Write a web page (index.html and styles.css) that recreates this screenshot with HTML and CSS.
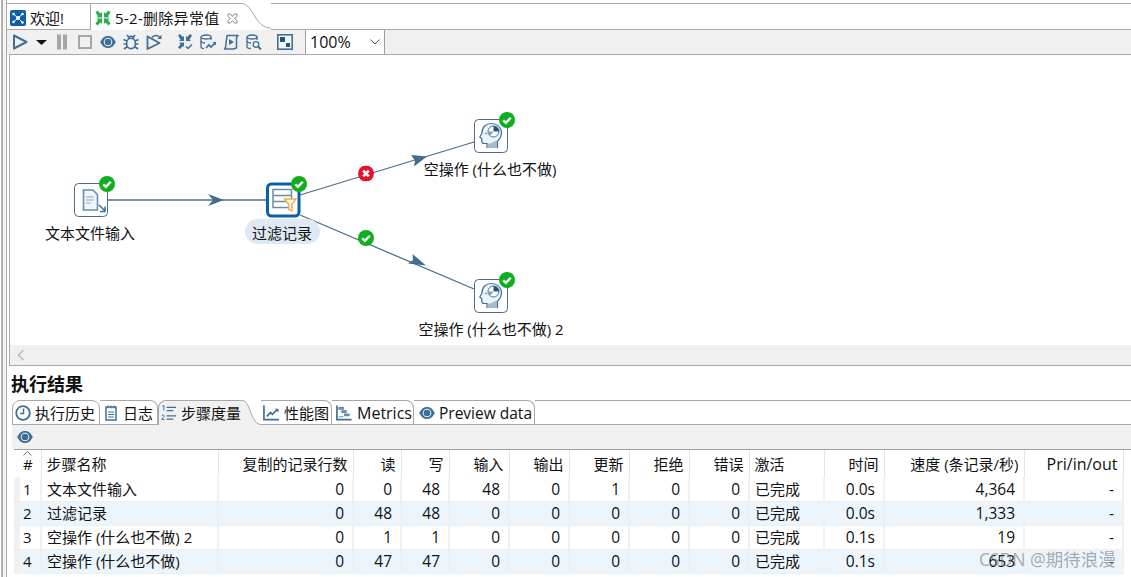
FILE: index.html
```html
<!DOCTYPE html>
<html lang="zh">
<head>
<meta charset="utf-8">
<title>5-2-删除异常值</title>
<link rel="stylesheet" href="styles.css">
</head>
<body>
<svg class="defs" aria-hidden="true">
  <symbol id="i-run" viewBox="0 0 16 16"><path d="M2 1.500 14.500 8 2 14.500Z" fill="none" stroke="#3f6f96" stroke-width="2" stroke-linejoin="round"/></symbol>
  <symbol id="i-eye" viewBox="0 0 16 16"><path d="M.2 8C2.500 3.500 5 2 8 2s5.500 1.500 7.800 6C13.500 12.500 11 14 8 14S2.500 12.500 .2 8Z" fill="#3f6f96"/><circle cx="8" cy="8" r="4.300" fill="#e8f0f6"/><circle cx="8" cy="8" r="3.300" fill="#3f6f96"/></symbol>
  <symbol id="i-bug" viewBox="0 0 16 16"><g fill="none" stroke="#3f6f96" stroke-width="1.600"><ellipse cx="8" cy="9.500" rx="4.400" ry="5.200"/><path d="M5.500 5.200C5.500 3 6.500 2.300 8 2.300s2.500.7 2.500 2.900M4 1l2 2.500M12 1l-2 2.500M0.500 5.500 4 7M15.500 5.500 12 7M0.500 10h3.500M15.500 10H12M1 15l3.500-2.500M15 15l-3.500-2.500"/></g></symbol>
  <symbol id="i-prev" viewBox="0 0 16 16"><path d="M1.500 2.500 13.500 9 1.500 15Z" fill="none" stroke="#3f6f96" stroke-width="1.800" stroke-linejoin="round"/><path d="M6 3.500C8 .8 11.500 .8 13.500 3" fill="none" stroke="#3f6f96" stroke-width="1.500"/><path d="M15.500 .8v4.200h-4.200Z" fill="#3f6f96"/></symbol>
  <symbol id="i-verify" viewBox="0 0 16 16"><g fill="#3f6f96"><path d="M1 1.500 3 0l3 3 1-1v5H2l1.500-1.500ZM15 1.500 13 0l-3 3-1-1v5h5l-1.500-1.500ZM1 13.500 3 15l3-3 1 1V8.500H2L3.500 10Z"/></g><path d="M9 12.500l2 2 4-4" fill="none" stroke="#3f6f96" stroke-width="1.500"/></symbol>
  <symbol id="i-dbchart" viewBox="0 0 16 16"><g fill="none" stroke="#3f6f96" stroke-width="1.300"><path d="M1 3v10c0 1 1.500 1.500 3 1.500M11 3v3"/><ellipse cx="6" cy="3" rx="5" ry="2"/><path d="M1 7c0 1 2 2 4 2"/><path d="M6 14l3-3 2 2 4.500-4.500" stroke-width="1.600"/></g><path d="M12.500 8H16v3.500Z" fill="#3f6f96"/></symbol>
  <symbol id="i-script" viewBox="0 0 16 16"><path d="M4 1.500h11l-1.500 2V14L10 15H1.500l1-1.500Z" fill="none" stroke="#3f6f96" stroke-width="1.500" stroke-linejoin="round"/><path d="M6 5l5 3-5 3Z" fill="#3f6f96"/></symbol>
  <symbol id="i-dbfind" viewBox="0 0 16 16"><g fill="none" stroke="#3f6f96" stroke-width="1.300"><path d="M1 3v10c0 1 1.500 1.500 4 1.500M11 3v3"/><ellipse cx="6" cy="3" rx="5" ry="2"/><path d="M1 7c0 1 2 2 4 2"/><circle cx="10" cy="10.500" r="2.800"/><path d="M12 12.500l3 3" stroke-width="1.800"/></g></symbol>
  <symbol id="i-map" viewBox="0 0 16 16"><rect x=".8" y=".8" width="14.400" height="14.400" fill="#f4f7fa" stroke="#3f6f96" stroke-width="1.600"/><rect x="3" y="3" width="5" height="5" fill="#24547c"/><rect x="9" y="9" width="4" height="4" fill="#24547c"/></symbol>
  <symbol id="i-clock" viewBox="0 0 16 16"><circle cx="8" cy="8" r="6.800" fill="none" stroke="#3f6f96" stroke-width="1.800"/><path d="M8.500 3.500v5H5" fill="none" stroke="#3f6f96" stroke-width="1.500"/></symbol>
  <symbol id="i-log" viewBox="0 0 12 16"><rect x="1" y="2" width="10" height="13" fill="none" stroke="#3f6f96" stroke-width="1.500"/><path d="M3 .5v3M6 .5v3M9 .5v3M3 7h6M3 9.500h6M3 12h6" stroke="#3f6f96"/></symbol>
  <symbol id="i-steps" viewBox="0 0 17 17"><path d="M6 2.500h10M6 6h7M6 11.500h10M6 15h7" stroke="#3f6f96" stroke-width="1.300"/><path d="M1.500 1 3 .5V6" fill="none" stroke="#3f6f96"/><path d="M.8 11.500c1-1.500 3-1 2.500.5L.8 15.500h3" fill="none" stroke="#3f6f96"/></symbol>
  <symbol id="i-perf" viewBox="0 0 17 17"><path d="M1 .5V15.500H17" fill="none" stroke="#3f6f96" stroke-width="1.800"/><path d="M4 12l4-4 2 2 5-5" fill="none" stroke="#3f6f96" stroke-width="1.800"/><path d="M12.500 4H16.500V8Z" fill="#3f6f96"/></symbol>
  <symbol id="i-metric" viewBox="0 0 17 17"><path d="M1 .5V15.500H16.500" fill="none" stroke="#3f6f96" stroke-width="1.800"/><path d="M3 2.500h5v2H3ZM6 6h5v2H6ZM9 9.500h5v2H9ZM3 12.500h5" fill="#7da0bd" stroke="#3f6f96" stroke-width=".8"/></symbol>
  <symbol id="i-head" viewBox="0 0 34 34"><path d="M13 29v-4.500H10c-1.500 0-2.200-1-2.200-2.300V19.500L5.800 18l2.200-4C8 8 12 4.500 17.500 4.500S27.500 8.500 27.500 13.500c0 4-1.500 6.500-4 8.500v7" fill="#edf5fb" stroke="#3f6f96" stroke-width="1.200"/><path d="M14 29v-4.500h2l7-3v7.500Z" fill="#a6bccd"/><circle cx="19.500" cy="12.500" r="5.500" fill="#fff" stroke="#3f6f96"/><path d="M19.500 12.500V7a5.500 5.500 0 0 1 5.500 5.500Z" fill="#24547c"/><path d="M19.500 12.500H14a5.500 5.500 0 0 0 2 4.200Z" fill="#7da0bd"/><circle cx="12" cy="14.500" r=".8" fill="#3f6f96"/></symbol>
  <symbol id="b-ok" viewBox="0 0 16 16"><circle cx="8" cy="8" r="8" fill="#0fae1e"/><path d="M4.200 8.300 6.900 10.900 11.800 5.700" fill="none" stroke="#fff" stroke-width="2.400"/></symbol>
  <symbol id="b-err" viewBox="0 0 16 16"><circle cx="8" cy="8" r="8" fill="#e8112d"/><path d="M5.200 5.200 10.800 10.800M10.800 5.200 5.200 10.800" fill="none" stroke="#fff" stroke-width="2.600"/></symbol>
</svg>

<div class="app">
  <div class="main">
    <div class="doc-tabs">
      <div class="doc-tab">
        <svg class="ico-16" viewBox="0 0 16 16"><rect width="16" height="16" rx="2" fill="#0e5ea8"/><g stroke="#fff" stroke-width="1"><path d="M8 8 3.500 4M8 8l4.500-4M8 8 3.500 12M8 8l4.500 4.500"/></g><g fill="#fff"><circle cx="8" cy="8" r="2"/><circle cx="3.500" cy="4" r="1.300"/><circle cx="12.500" cy="4" r="1.300"/><circle cx="3.500" cy="12" r="1.300"/><circle cx="12.500" cy="12.500" r="1.300"/></g></svg>
        <span>欢迎!</span>
      </div>
      <div class="doc-tab active">
        <svg class="ico-16" viewBox="0 0 16 16"><g fill="#27b04a"><path d="M.5 2.500 2.500.5l3 3L7 2v5.500H1.500L3 6Z"/><path d="M15.500 2.500 13.500.5l-3 3L9 2v5.500h5.500L13 6Z"/><path d="M.5 13.500l2 2 3-3L7 14V8.500H1.500L3 10Z"/><path d="M15.500 13.500l-2 2-3-3L9 14V8.500h5.500L13 10Z"/></g></svg>
        <span class="doc-title">5-2-删除异常值</span>
        <svg class="ico-close" viewBox="0 0 11 11"><path d="M1 1h2.500L5.500 3.500 7.500 1H10v2.500L7.500 5.500 10 7.500V10H7.500L5.500 7.500 3.500 10H1V7.500L3.500 5.500 1 3.500Z" fill="none" stroke="#8a8a8a"/></svg>
      </div>
      <svg class="tab-curve" viewBox="0 0 31 27"><path d="M0 0H1C14 0 14 25 31 25V27H0Z" fill="#fff"/><path d="M0 .5H1C14 .5 14 25 31 25" fill="none" stroke="#a8a8a8"/></svg>
      <div class="doc-rest"></div>
    </div>

    <div class="toolbar">
      <svg class="tool"><use href="#i-run"/></svg>
      <svg class="caret" viewBox="0 0 11 5"><path d="M0 0h11L5.500 5Z" fill="#111"/></svg>
      <svg class="tool" viewBox="0 0 16 16"><path d="M3 .5h4v15H3ZM9 .5h4v15H9Z" fill="#a6a6a6"/></svg>
      <svg class="tool" viewBox="0 0 16 16"><rect x="2" y="2" width="12" height="12" fill="none" stroke="#a6a6a6" stroke-width="2"/></svg>
      <svg class="tool"><use href="#i-eye"/></svg>
      <svg class="tool"><use href="#i-bug"/></svg>
      <svg class="tool"><use href="#i-prev"/></svg>
      <svg class="tool wide-gap"><use href="#i-verify"/></svg>
      <svg class="tool"><use href="#i-dbchart"/></svg>
      <svg class="tool"><use href="#i-script"/></svg>
      <svg class="tool"><use href="#i-dbfind"/></svg>
      <svg class="tool wide-gap"><use href="#i-map"/></svg>
      <div class="combo"><span>100%</span><svg class="chev" viewBox="0 0 10 6"><path d="M.5 .5 5 5 9.500 .5" fill="none" stroke="#555"/></svg></div>
    </div>

    <div class="canvas">
      <svg class="diagram" viewBox="10 55 1121 290">
        <g stroke="#4a6f8e" stroke-width="1.300" fill="none">
          <path d="M108 200H266"/>
          <path d="M300 195 474 142"/>
          <path d="M300 215 474 289"/>
        </g>
        <g fill="#426c8e">
          <path d="M224 200 208 194 213 200 208 206Z"/>
          <path d="M427 156.500 411 155 415 160.500 414 166.500Z"/>
          <path d="M426 265.500 412.500 254 413 260 408 263.500Z"/>
        </g>
        <rect class="sel-pill" x="245" y="219" width="75" height="25" rx="12.500"/>
        <rect x="74.500" y="183.500" width="33" height="33" rx="4" fill="#fff" stroke="#4a6f8e"/>
        <g>
          <path d="M83.500 190h9.500l4.500 4.500V210h-14Z" fill="#edf5fb" stroke="#6d8ca6" stroke-width="1.600"/>
          <path d="M86 197h8M86 200h8M86 203h5" stroke="#8fa8bc"/>
          <path d="M99 205l6 6M105 206.500v5h-5" fill="none" stroke="#3f6f96" stroke-width="1.500"/>
        </g>
        <rect x="267.500" y="184" width="31.500" height="32" rx="4" fill="#fff" stroke="#0b5ea8" stroke-width="3"/>
        <g fill="none" stroke="#6d8ca6" stroke-width="1.500">
          <rect x="273" y="189.500" width="18.500" height="18"/>
          <path d="M273 195.500h18.500M273 201.500h18.500"/>
        </g>
        <path d="M284.500 199h11.500l-4.200 5.500v6.500l-3-1.500v-5Z" fill="#fff8ec" stroke="#f5a94a" stroke-width="1.300"/>
        <rect x="474.500" y="119.500" width="33" height="33" rx="4" fill="#fff" stroke="#4a6f8e"/>
        <use href="#i-head" x="474" y="119" width="34" height="34"/>
        <rect x="474.500" y="279.500" width="33" height="33" rx="4" fill="#fff" stroke="#4a6f8e"/>
        <use href="#i-head" x="474" y="279" width="34" height="34"/>
        <use href="#b-ok" x="99" y="176" width="16" height="16"/>
        <use href="#b-ok" x="291" y="176" width="16" height="16"/>
        <use href="#b-ok" x="499" y="112" width="16" height="16"/>
        <use href="#b-ok" x="499" y="272" width="16" height="16"/>
        <use href="#b-err" x="358" y="165.500" width="16" height="16"/>
        <use href="#b-ok" x="358" y="230" width="16" height="16"/>
      </svg>
      <span class="node-label n1">文本文件输入</span>
      <span class="node-label n2">过滤记录</span>
      <span class="node-label n3">空操作 (什么也不做)</span>
      <span class="node-label n4">空操作 (什么也不做) 2</span>
    </div>

    <div class="hscroll"><svg class="scroll-arrow" viewBox="0 0 8 12"><path d="M6.500 1 1.500 6l5 5" fill="none" stroke="#bdbdbd" stroke-width="1.600"/></svg></div>

    <h2 class="results-title">执行结果</h2>

    <div class="res-tabs">
      <div class="res-tab t1"><svg class="ico-16"><use href="#i-clock"/></svg><span>执行历史</span></div>
      <div class="res-tab t2"><svg class="ico-log"><use href="#i-log"/></svg><span>日志</span></div>
      <div class="res-tab t3 active"><svg class="ico-16"><use href="#i-steps"/></svg><span>步骤度量</span></div>
      <svg class="res-curve" viewBox="0 0 19 25"><path d="M0 0C9 0 8 24 19 24V25H0Z" fill="#f0f0f0"/><path d="M0 .5C9 .5 8 24 19 24.500" fill="none" stroke="#a8a8a8"/></svg>
      <div class="res-tab t4"><svg class="ico-16"><use href="#i-perf"/></svg><span>性能图</span></div>
      <div class="res-tab t5"><svg class="ico-16"><use href="#i-metric"/></svg><span>Metrics</span></div>
      <div class="res-tab t6"><svg class="ico-16"><use href="#i-eye"/></svg><span>Preview data</span></div>
      <div class="res-rest"></div>
    </div>

    <div class="res-toolbar"><svg class="ico-16"><use href="#i-eye"/></svg></div>

    <div class="table-wrap">
      <table class="steps">
        <colgroup>
          <col class="c-idx"><col class="c-name"><col class="c-copy"><col class="c-rw"><col class="c-rw">
          <col class="c-n"><col class="c-n"><col class="c-n"><col class="c-n"><col class="c-n">
          <col class="c-act"><col class="c-n"><col class="c-speed"><col class="c-pri">
        </colgroup>
        <thead>
          <tr>
            <th class="idx"><svg class="sort" viewBox="0 0 9 5"><path d="M.5 4.500 4.500 .5l4 4" fill="none" stroke="#777"/></svg>#</th>
            <th class="left">步骤名称</th><th>复制的记录行数</th><th>读</th><th>写</th><th>输入</th><th>输出</th><th>更新</th><th>拒绝</th><th>错误</th><th class="left">激活</th><th>时间</th><th>速度 (条记录/秒)</th><th class="latin">Pri/in/out</th>
          </tr>
        </thead>
        <tbody>
          <tr><td class="idx">1</td><td class="left">文本文件输入</td><td>0</td><td>0</td><td>48</td><td>48</td><td>0</td><td>1</td><td>0</td><td>0</td><td class="left">已完成</td><td>0.0s</td><td>4,364</td><td>-</td></tr>
          <tr class="alt"><td class="idx">2</td><td class="left">过滤记录</td><td>0</td><td>48</td><td>48</td><td>0</td><td>0</td><td>0</td><td>0</td><td>0</td><td class="left">已完成</td><td>0.0s</td><td>1,333</td><td>-</td></tr>
          <tr><td class="idx">3</td><td class="left">空操作 (什么也不做) 2</td><td>0</td><td>1</td><td>1</td><td>0</td><td>0</td><td>0</td><td>0</td><td>0</td><td class="left">已完成</td><td>0.1s</td><td>19</td><td>-</td></tr>
          <tr class="alt"><td class="idx">4</td><td class="left">空操作 (什么也不做)</td><td>0</td><td>47</td><td>47</td><td>0</td><td>0</td><td>0</td><td>0</td><td>0</td><td class="left">已完成</td><td>0.1s</td><td>653</td><td>-</td></tr>
        </tbody>
      </table>
    </div>
    <span class="watermark">CSDN @期待浪漫</span>
  </div>
</div>
</body>
</html>
```
FILE: styles.css
```css
* { box-sizing: border-box; }
html, body { margin: 0; height: 100%; }
body {
  width: 1131px;
  height: 577px;
  overflow: hidden;
  background: #fff;
  color: #111;
  font: 15px/20px "Open Sans", "Noto Sans CJK SC", sans-serif;
}
.defs { position: absolute; width: 0; height: 0; }
.app {
  height: 577px;
  margin-left: 1px;
  padding-left: 3px;
  border-left: 2px solid #b0b0b0;
  background: #f4f4f4;
}
.main {
  position: relative;
  height: 577px;
  background: #fff;
  overflow: hidden;
}
.main::before {
  content: "";
  position: absolute;
  left: 0;
  top: 0;
  bottom: 0;
  width: 1px;
  background: #a8a8a8;
}
svg { display: block; flex: none; }

/* document tabs */
.doc-tabs {
  display: flex;
  height: 27px;
  margin-top: 3px;
  background: #fff;
}
.doc-tab {
  display: flex;
  align-items: center;
  gap: 4px;
  height: 27px;
  padding: 2px 0 0 3px;
  width: 84px;
  margin-left: 1px;
  border-top: 1px solid #a8a8a8;
  border-bottom: 1px solid #a8a8a8;
  border-right: 1px solid #a8a8a8;
}
.doc-tab.active {
  width: 149px;
  margin-left: 0;
  padding-left: 4px;
  border-bottom: 0;
  border-right: 0;
}
.doc-title { letter-spacing: .3px; }
.ico-16 { width: 16px; height: 16px; }
.ico-close { width: 11px; height: 11px; margin-left: 3px; }
.tab-curve { width: 31px; height: 27px; }
.doc-rest { flex: 1; height: 27px; border-top: 1px solid #a8a8a8; border-bottom: 1px solid #a8a8a8; background: #fff; }

/* toolbar */
.toolbar {
  display: flex;
  align-items: center;
  gap: 7px;
  height: 24px;
  padding-left: 6px;
  background: #f0f0f0;
}
.tool { width: 16px; height: 16px; }
.caret { width: 11px; height: 5px; margin: 1px 0 0 1px; }
.wide-gap { margin-left: 8px; }
.combo {
  display: flex;
  align-items: center;
  justify-content: space-between;
  width: 80px;
  height: 24px;
  margin-left: 5px;
  padding: 0 4px;
  font-size: 16px;
  background: #fff;
  border-left: 1px solid #a0a0a0;
  border-right: 1px solid #a0a0a0;
}
.chev { width: 10px; height: 6px; }

/* canvas */
.canvas {
  position: relative;
  height: 291px;
  margin-left: 3px;
  border-top: 1px solid #a8a8a8;
  border-left: 1px solid #a8a8a8;
  background: #fff;
}
.diagram { position: absolute; left: 0; top: 0; width: 1121px; height: 290px; }
.sel-pill { fill: #dfe9f3; }
.node-label {
  position: absolute;
  transform: translateX(-50%);
  white-space: nowrap;
  line-height: 20px;
}
.n1 { left: 80px; top: 168px; }
.n2 { left: 272px; top: 168px; }
.n3 { left: 480px; top: 104px; }
.n4 { left: 481px; top: 264px; }

.hscroll {
  display: flex;
  align-items: center;
  height: 21px;
  margin-left: 3px;
  padding-left: 7px;
  background: #f0f0f0;
  border-left: 1px solid #a8a8a8;
  border-bottom: 1px solid #a8a8a8;
}
.scroll-arrow { width: 8px; height: 12px; }

.results-title {
  height: 34px;
  margin: 0;
  padding: 6px 0 0 5px;
  font-size: 18px;
  line-height: 24px;
  font-weight: 700;
  color: #111;
}

/* result tabs */
.res-tabs {
  display: flex;
  height: 25px;
  margin-left: 6px;
}
.res-tab {
  display: flex;
  align-items: center;
  gap: 4px;
  height: 25px;
  padding-left: 2px;
  border-top: 1px solid #a8a8a8;
  border-right: 1px solid #a8a8a8;
  border-bottom: 1px solid #a8a8a8;
  border-top-right-radius: 8px;
  white-space: nowrap;
}
.res-tab:first-child { border-left: 1px solid #a8a8a8; border-top-left-radius: 8px; }
.t1 { width: 88px; }
.t2 { width: 58px; gap: 6px; padding-left: 5px; }
.ico-log { width: 12px; height: 16px; }
.t3 {
  width: 84px;
  border-right: 0;
  border-bottom: 0;
  border-top-right-radius: 0;
  background: #f0f0f0;
  border-left: 1px solid #a8a8a8;
  border-top-left-radius: 8px;
}
.res-curve { width: 19px; height: 25px; }
.t4 { width: 71px; gap: 5px; }
.t5 { width: 82px; padding-left: 4px; gap: 5px; font-size: 16px; }
.t6 { width: 121px; padding-left: 5px; font-size: 15.500px; }
.res-rest { flex: 1; height: 25px; border-top: 1px solid #a8a8a8; border-bottom: 1px solid #a8a8a8; }

.res-toolbar {
  display: flex;
  align-items: center;
  height: 24px;
  margin-left: 6px;
  padding-left: 5px;
  background: #f0f0f0;
}

/* table */
.table-wrap {
  margin-left: 8px;
  border-top: 1px solid #a0a0a0;
  height: 128px;
  background: #fff;
}
.steps {
  table-layout: fixed;
  width: 1109px;
  border-collapse: collapse;
}
.c-idx { width: 27px; }
.c-name { width: 177px; }
.c-copy { width: 135px; }
.c-rw { width: 48px; }
.c-n { width: 60px; }
.c-act { width: 75px; }
.c-speed { width: 140px; }
.c-pri { width: 99px; }
th, td {
  padding: 0 8px 0 0;
  text-align: right;
  font-weight: 400;
  white-space: nowrap;
  overflow: hidden;
  border-right: 2px solid #eef0f2;
}
th { height: 27px; padding: 1px 5px 0 0; border-right: 1px solid #e4e4e4; }
th.latin { font-size: 16px; }
td { height: 24px; font-size: 15.500px; border-bottom: 1px solid #eceff2; }
th.left, td.left { text-align: left; padding-left: 5px; padding-right: 0; font-size: 15px; }
th.idx, td.idx { text-align: left; padding-left: 9px; padding-right: 0; font-size: 15px; }
td.idx { box-shadow: inset 6px 0 #f0f0f0; }
th.idx { position: relative; }
.sort { position: absolute; left: 9px; top: 1px; width: 9px; height: 5px; }
tr.alt td { background: #edf5fc; }

.watermark {
  position: absolute;
  left: 973px;
  top: 549px;
  font-size: 17.500px;
  line-height: 20px;
  color: rgba(120, 120, 120, .62);
  white-space: nowrap;
}
```
